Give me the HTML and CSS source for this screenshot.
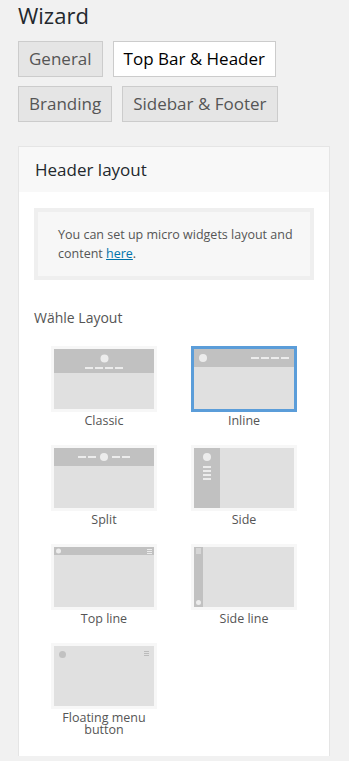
FILE: index.html
```html
<!DOCTYPE html>
<html lang="de">
<head>
  <meta charset="UTF-8" />
  <meta name="viewport" content="width=device-width, initial-scale=1.0"/>
  <title>Wizard</title>
  <link rel="stylesheet" href="styles.css">
</head>
<body>
  <h1 class="title">Wizard</h1>

  <nav class="tabs">
    <a class="tab">General</a>
    <a class="tab active">Top Bar &amp; Header</a>
    <a class="tab">Branding</a>
    <a class="tab">Sidebar &amp; Footer</a>
  </nav>

  <section class="panel">
    <h2 class="panel-head">Header layout</h2>
    <div class="panel-body">
      <p class="notice">You can set up micro widgets layout and content <a href="#">here</a>.</p>

      <h3 class="label">Wähle Layout</h3>

      <div class="layouts">
        <div class="layout">
          <div class="thumb">
            <svg width="100" height="60" viewBox="0 0 100 60">
              <rect width="100" height="60" fill="#e0e0e0"/>
              <rect width="100" height="24" fill="#c1c1c1"/>
              <circle cx="50.5" cy="9.5" r="4" fill="#ececec"/>
              <g fill="#ececec">
                <rect x="31" y="18" width="8" height="2"/>
                <rect x="41" y="18" width="8" height="2"/>
                <rect x="51" y="18" width="8" height="2"/>
                <rect x="61" y="18" width="8" height="2"/>
              </g>
            </svg>
          </div>
          <span class="name">Classic</span>
        </div>

        <div class="layout">
          <div class="thumb selected">
            <svg width="100" height="60" viewBox="0 0 100 60">
              <rect width="100" height="60" fill="#e0e0e0"/>
              <rect width="100" height="18" fill="#c1c1c1"/>
              <circle cx="9" cy="9" r="4" fill="#ececec"/>
              <g fill="#ececec">
                <rect x="57" y="8" width="8" height="2"/>
                <rect x="67" y="8" width="8" height="2"/>
                <rect x="77" y="8" width="8" height="2"/>
                <rect x="87" y="8" width="8" height="2"/>
              </g>
            </svg>
          </div>
          <span class="name">Inline</span>
        </div>

        <div class="layout">
          <div class="thumb">
            <svg width="100" height="60" viewBox="0 0 100 60">
              <rect width="100" height="60" fill="#e0e0e0"/>
              <rect width="100" height="18" fill="#c1c1c1"/>
              <circle cx="50" cy="9" r="4" fill="#ececec"/>
              <g fill="#ececec">
                <rect x="24" y="8" width="8" height="2"/>
                <rect x="34" y="8" width="8" height="2"/>
                <rect x="58" y="8" width="8" height="2"/>
                <rect x="68" y="8" width="8" height="2"/>
              </g>
            </svg>
          </div>
          <span class="name">Split</span>
        </div>

        <div class="layout">
          <div class="thumb">
            <svg width="100" height="60" viewBox="0 0 100 60">
              <rect width="100" height="60" fill="#e0e0e0"/>
              <rect width="26" height="60" fill="#c1c1c1"/>
              <circle cx="13" cy="9" r="4" fill="#ececec"/>
              <g fill="#ececec">
                <rect x="9" y="18" width="8" height="2"/>
                <rect x="9" y="22" width="8" height="2"/>
                <rect x="9" y="26" width="8" height="2"/>
                <rect x="9" y="30" width="8" height="2"/>
              </g>
            </svg>
          </div>
          <span class="name">Side</span>
        </div>

        <div class="layout">
          <div class="thumb">
            <svg width="100" height="60" viewBox="0 0 100 60">
              <rect width="100" height="60" fill="#e0e0e0"/>
              <rect width="100" height="8" fill="#c1c1c1"/>
              <circle cx="4.5" cy="4" r="2.5" fill="#ececec"/>
              <g fill="#ececec">
                <rect x="93" y="2" width="5" height="1"/>
                <rect x="93" y="4" width="5" height="1"/>
                <rect x="93" y="6" width="5" height="1"/>
              </g>
            </svg>
          </div>
          <span class="name">Top line</span>
        </div>

        <div class="layout">
          <div class="thumb">
            <svg width="100" height="60" viewBox="0 0 100 60">
              <rect width="100" height="60" fill="#e0e0e0"/>
              <rect width="9" height="60" fill="#c1c1c1"/>
              <circle cx="4.5" cy="55.5" r="2.5" fill="#ececec"/>
              <g fill="#ececec">
                <rect x="2" y="1.5" width="5" height="1"/>
                <rect x="2" y="3.5" width="5" height="1"/>
                <rect x="2" y="5.5" width="5" height="1"/>
              </g>
            </svg>
          </div>
          <span class="name">Side line</span>
        </div>

        <div class="layout">
          <div class="thumb">
            <svg width="100" height="60" viewBox="0 0 100 60">
              <rect width="100" height="60" fill="#e0e0e0"/>
              <circle cx="8.5" cy="8.5" r="3.5" fill="#c1c1c1"/>
              <g fill="#bbbbbb">
                <rect x="90" y="5" width="5" height="1"/>
                <rect x="90" y="7" width="5" height="1"/>
                <rect x="90" y="9" width="5" height="1"/>
              </g>
            </svg>
          </div>
          <span class="name">Floating menu button</span>
        </div>
      </div>
    </div>
  </section>
</body>
</html>
```

FILE: styles.css
```css
body {
  margin: 0;
  padding: 0 0 0 18px;
  font-family: 'Open Sans', sans-serif;
  background: #f1f1f1;
  color: #555;
}

.title {
  margin: 0;
  padding-top: 1px;
  font-size: 22px;
  font-weight: normal;
  line-height: 28px;
  color: #23282d;
}

.tabs {
  display: flex;
  flex-wrap: wrap;
  gap: 9px 10px;
  width: 300px;
  margin-top: 12px;
}

.tab {
  display: block;
  height: 34px;
  line-height: 34px;
  padding: 0 10px;
  font-size: 17px;
  color: #555;
  background: #e5e5e5;
  border: 1px solid #ccc;
}

.tab.active {
  background: #fff;
  color: #000;
}

.panel {
  width: 310px;
  margin-top: 24px;
  background: #fff;
  border: 1px solid #e5e5e5;
  border-bottom: none;
}

.panel-head {
  margin: 0;
  height: 45px;
  line-height: 45px;
  padding-left: 16px;
  font-size: 17px;
  font-weight: normal;
  color: #23282d;
  background: #f8f8f8;
}

.panel-body {
  padding: 16px 15px 20px 15px;
}

.notice {
  margin: 0;
  background: #f7f7f7;
  border: 4px solid #efefef;
  padding: 13px 12px 13px 20px;
  font-size: 12.5px;
  line-height: 19px;
}

.notice a {
  color: #0073aa;
}

.label {
  margin: 28px 0 0 0;
  font-size: 14px;
  font-weight: normal;
  line-height: 20px;
  color: #555;
}

.layouts {
  display: grid;
  grid-template-columns: 1fr 1fr;
  row-gap: 18px;
  margin-top: 18px;
}

.layout {
  display: flex;
  flex-direction: column;
  align-items: center;
}

.thumb {
  border: 3px solid #f7f7f7;
}

.thumb svg {
  display: block;
}

.thumb.selected {
  border-color: #5b9dd9;
}

.name {
  width: 106px;
  margin-top: 3px;
  font-size: 12.5px;
  line-height: 12px;
  text-align: center;
}
```
